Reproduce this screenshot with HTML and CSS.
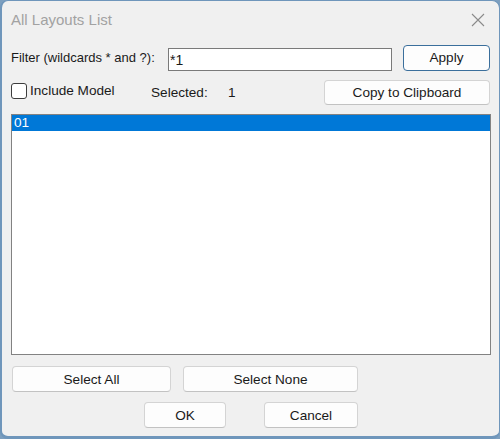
FILE: index.html
```html
<!DOCTYPE html>
<html lang="en">
  <head>
    <meta charset="UTF-8" />
    <meta name="viewport" content="width=device-width, initial-scale=1.0" />
    <title>All Layouts List</title>
    <link rel="stylesheet" href="styles.css">
  </head>
  <body>
    <div class="dialog">
      <div class="title-bar">
        <span class="title">All Layouts List</span>
        <svg class="close" width="14" height="14" viewBox="0 0 14 14">
          <path d="M1 1 L13 13 M13 1 L1 13" stroke="#8a8a8a" stroke-width="1.1" fill="none" />
        </svg>
      </div>

      <div class="content">
        <div class="filter-row">
          <label class="filter-label" for="filter">Filter (wildcards * and ?):</label>
          <input id="filter" class="filter-input" type="text" value="*1" />
          <button class="btn btn-default apply">Apply</button>
        </div>

        <div class="options-row">
          <label class="check">
            <span class="check-box"></span>
            Include Model
          </label>
          <span class="selected-label">Selected:</span>
          <span class="selected-count">1</span>
          <button class="btn copy">Copy to Clipboard</button>
        </div>

        <div class="list-box">
          <div class="list-item active">01</div>
        </div>

        <div class="select-row">
          <button class="btn select-all">Select All</button>
          <button class="btn select-none">Select None</button>
        </div>

        <div class="confirm-row">
          <button class="btn ok">OK</button>
          <button class="btn cancel">Cancel</button>
        </div>
      </div>
    </div>
  </body>
</html>
```

FILE: styles.css
```css
html,
body {
  margin: 0;
  height: 100%;
}

body {
  background-color: #7d9fbf;
  font-family: "Liberation Sans", Arial, sans-serif;
  font-size: 13.6px;
  color: #1a1a1a;
}

.dialog {
  box-sizing: border-box;
  height: 439px;
  background-color: #f0f0f0;
  border: 1px solid #6f96bb;
  border-left-width: 2px;
  border-bottom-width: 3px;
  border-radius: 8px;
  overflow: hidden;
}

.title-bar {
  display: flex;
  align-items: center;
  justify-content: space-between;
  height: 37px;
  padding: 0 14px 0 9px;
}

.title {
  font-size: 15px;
  color: #a2a2a2;
}

.content {
  padding: 6px 9px 0 9px;
}

/* buttons */
.btn {
  box-sizing: border-box;
  height: 26px;
  padding: 0;
  font-family: inherit;
  font-size: 13.6px;
  color: #1a1a1a;
  background-color: #fdfdfd;
  border: 1px solid #d4d4d4;
  border-bottom-color: #c2c2c2;
  border-radius: 4px;
}

.btn-default {
  border-color: #3b6f9c;
}

/* filter row */
.filter-row {
  display: flex;
  align-items: center;
  height: 27px;
}

.filter-label {
  width: 157px;
  font-size: 13px;
}

.filter-input {
  box-sizing: border-box;
  width: 224px;
  height: 23px;
  margin: 4px 0 0 0;
  padding: 0 1px;
  font-family: inherit;
  font-size: 14px;
  color: #1a1a1a;
  background: #fff;
  border: 1px solid #7a7a7a;
  border-radius: 0;
  outline: none;
}

.apply {
  width: 87px;
  margin-left: 11px;
}

/* options row */
.options-row {
  display: flex;
  align-items: center;
  height: 25px;
  margin-top: 9px;
}

.check {
  display: flex;
  align-items: center;
  gap: 3px;
  width: 140px;
  margin-top: -4px;
}

.check-box {
  box-sizing: border-box;
  width: 16px;
  height: 16px;
  background: #fff;
  border: 1px solid #3c3c3c;
  border-radius: 3px;
}

.selected-label {
  width: 77px;
}

.selected-count {
  width: 96px;
}

.copy {
  width: 166px;
  height: 25px;
}

/* list */
.list-box {
  box-sizing: border-box;
  width: 480px;
  height: 241px;
  margin-top: 9px;
  background: #fff;
  border: 1px solid #828282;
}

.list-item {
  height: 16px;
  line-height: 16px;
  padding-left: 2px;
  font-size: 13.6px;
}

.list-item.active {
  background-color: #0078d7;
  color: #fff;
}

/* bottom buttons */
.select-row {
  display: flex;
  gap: 12px;
  margin-top: 11px;
  padding-left: 1px;
}

.select-all {
  width: 159px;
}

.select-none {
  width: 175px;
}

.confirm-row {
  display: flex;
  gap: 38px;
  margin-top: 10px;
  padding-left: 133px;
}

.ok {
  width: 82px;
}

.cancel {
  width: 94px;
}
```
